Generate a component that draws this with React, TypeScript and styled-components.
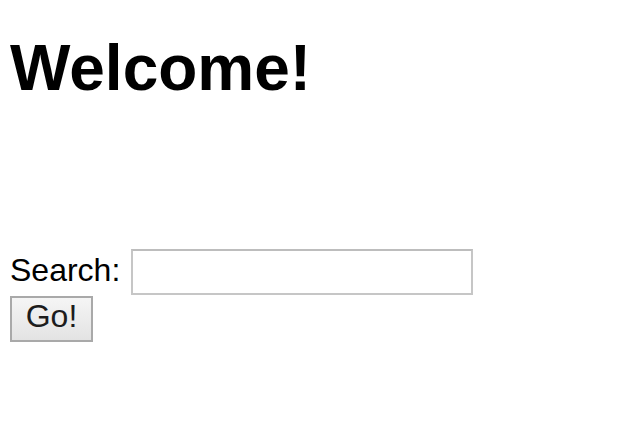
import styled, { createGlobalStyle } from 'styled-components'

const GlobalStyle = createGlobalStyle`
  body {
    margin: 0;
    background: #fff;
    color: #000;
    font-family: 'Liberation Sans', Helvetica, Arial, sans-serif;
  }
`
const Page = styled.div`
  padding: 0 10px;
`
const Title = styled.h1`
  margin: 31px 0 0;
  font-size: 64px;
  line-height: 74px;
  font-weight: 700;
`
const SearchForm = styled.form`
  display: flex;
  flex-direction: column;
  align-items: flex-start;
  margin-top: 144px;
`
const SearchRow = styled.div`
  display: flex;
  align-items: flex-start;
  gap: 11px;
`
const Label = styled.label`
  padding-top: 3px;
  font-size: 32px;
  line-height: 37px;
`
const Input = styled.input`
  box-sizing: border-box;
  width: 342px;
  height: 46px;
  margin: 0;
  padding: 0 6px;
  border: 2px solid #c6c6c6;
  border-top-color: #bdbdbd;
  font-family: inherit;
  font-size: 32px;
  outline: none;
`
const Button = styled.button`
  box-sizing: border-box;
  width: 83px;
  height: 46px;
  margin: 1px 0 0;
  padding: 0 0 7px;
  border: 2px solid #a9a9a9;
  border-radius: 0;
  background: linear-gradient(#f5f5f5, #e3e3e3);
  color: #1c1c1c;
  font-family: inherit;
  font-size: 32px;
  line-height: 37px;
`

const App = () => {
  return (
    <>
      <GlobalStyle />
      <Page>
        <Title>Welcome!</Title>
        <SearchForm onSubmit={(e) => e.preventDefault()}>
          <SearchRow>
            <Label htmlFor="q">Search:</Label>
            <Input id="q" type="text" />
          </SearchRow>
          <Button type="submit">Go!</Button>
        </SearchForm>
      </Page>
    </>
  )
}

export default App
